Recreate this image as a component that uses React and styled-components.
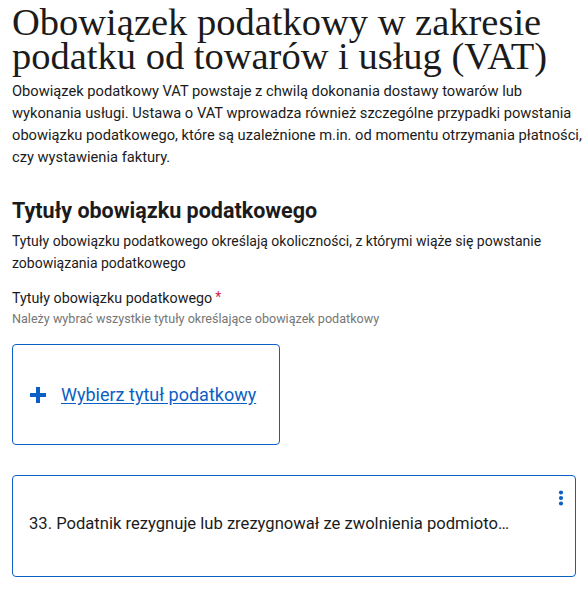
import React from 'react'
import styled, { createGlobalStyle } from 'styled-components'

const GlobalStyle = createGlobalStyle`
  html, body {
    margin: 0;
    padding: 0;
    background: #ffffff;
  }
  body {
    font-family: Roboto, "Liberation Sans", sans-serif;
    color: #1b1b1b;
  }
`

const Page = styled.main`
  padding: 0 0 0 12px;
  width: 588px;
  box-sizing: border-box;
`

const Title = styled.h1`
  margin: 5px 0 7px;
  font-family: "Liberation Serif", "DejaVu Serif", serif;
  font-weight: 400;
  font-size: 38.5px;
  line-height: 34px;
  color: #1b1b1b;
`

const Text = styled.p`
  margin: ${props => props.$top || 0}px 0 0;
  font-size: ${props => props.$size || 14}px;
  line-height: 22px;
  color: #1b1b1b;
`

const SectionTitle = styled.h2`
  margin: 29px 0 0;
  font-size: 21.5px;
  line-height: 28px;
  font-weight: 700;
  color: #1b1b1b;
`

const Label = styled.div`
  margin-top: 14px;
  font-size: 14.3px;
  line-height: 20px;
  color: #1b1b1b;
`

const Required = styled.span`
  color: #d31e4b;
  margin-left: 3px;
  font-size: 14px;
  position: relative;
  top: -1px;
`

const Hint = styled.div`
  margin-top: 3px;
  font-size: 12.6px;
  line-height: 16px;
  color: #767676;
`

const Card = styled.div`
  box-sizing: border-box;
  border: 1px solid #0b5fc5;
  border-radius: 4px;
  background: #fff;
  display: flex;
  align-items: center;
  width: ${props => props.$width}px;
  height: ${props => props.$height}px;
  margin-top: ${props => props.$top}px;
`

const AddButton = styled.a`
  display: flex;
  align-items: center;
  gap: 14px;
  padding-left: 16px;
  color: #0b5fc5;
  font-size: 18px;
  line-height: 24px;
  text-decoration: underline;
  text-underline-offset: 2px;
  cursor: pointer;
`

const ItemText = styled.div`
  flex: 1;
  min-width: 0;
  padding: 0 0 4px 16px;
  font-size: 16.6px;
  line-height: 22px;
  color: #1b1b1b;
  white-space: nowrap;
  overflow: hidden;
  text-overflow: ellipsis;
`

const MenuButton = styled.button`
  align-self: flex-start;
  flex: 0 0 auto;
  width: 55px;
  display: flex;
  justify-content: flex-end;
  padding: 14px 11px 0 0;
  border: none;
  background: none;
  cursor: pointer;
`

function PlusIcon() {
  return (
    <svg width="18" height="18" viewBox="0 0 18 18">
      <path d="M9 1v16M1 9h16" stroke="#0b5fc5" strokeWidth="4" strokeLinecap="butt" />
    </svg>
  )
}

function KebabIcon() {
  return (
    <svg width="6" height="16" viewBox="0 0 6 16">
      <circle cx="3" cy="2.5" r="2.1" fill="#0b5fc5" />
      <circle cx="3" cy="8" r="2.1" fill="#0b5fc5" />
      <circle cx="3" cy="13.5" r="2.1" fill="#0b5fc5" />
    </svg>
  )
}

export default function App() {
  return (
    <>
      <GlobalStyle />
      <Page>
        <Title>Obowiązek podatkowy w zakresie podatku od towarów i usług (VAT)</Title>
        <Text $size={14.7}>
          Obowiązek podatkowy VAT powstaje z chwilą dokonania dostawy towarów lub
          wykonania usługi. Ustawa o VAT wprowadza również szczególne przypadki powstania
          obowiązku podatkowego, które są uzależnione m.in. od momentu otrzymania płatności,
          czy wystawienia faktury.
        </Text>

        <SectionTitle>Tytuły obowiązku podatkowego</SectionTitle>
        <Text $top={5}>
          Tytuły obowiązku podatkowego określają okoliczności, z którymi wiąże się powstanie
          zobowiązania podatkowego
        </Text>

        <Label>
          Tytuły obowiązku podatkowego<Required>*</Required>
        </Label>
        <Hint>Należy wybrać wszystkie tytuły określające obowiązek podatkowy</Hint>

        <Card $width={268} $height={101} $top={17}>
          <AddButton>
            <PlusIcon />
            Wybierz tytuł podatkowy
          </AddButton>
        </Card>

        <Card $width={564} $height={102} $top={30}>
          <ItemText>
            33. Podatnik rezygnuje lub zrezygnował ze zwolnienia podmiotowego lub zwolnienia
          </ItemText>
          <MenuButton aria-label="Menu">
            <KebabIcon />
          </MenuButton>
        </Card>
      </Page>
    </>
  )
}
